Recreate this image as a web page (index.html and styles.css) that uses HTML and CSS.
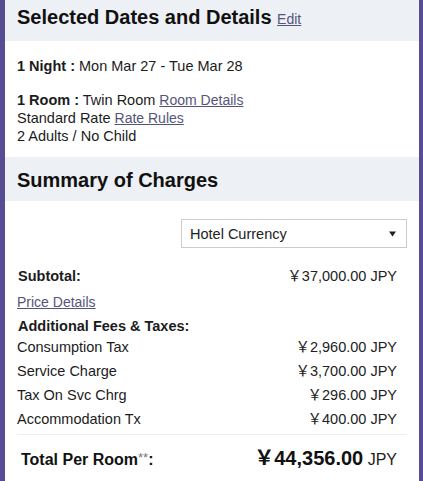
FILE: index.html
```html
<!DOCTYPE html>
<html lang="en">
<head>
<meta charset="utf-8">
<title>Selected Dates and Details</title>
<link rel="stylesheet" href="styles.css">
</head>
<body>
<div class="panel">
  <div class="section-head section-head--first">
    <h2 class="section-title">Selected Dates and Details <a href="#" class="link edit-link">Edit</a></h2>
  </div>
  <div class="details">
    <p class="detail-line"><b>1 Night :</b> Mon Mar 27 - Tue Mar 28</p>
    <div class="detail-group">
      <p class="detail-line"><b>1 Room :</b> Twin Room <a href="#" class="link">Room Details</a></p>
      <p class="detail-line">Standard Rate <a href="#" class="link">Rate Rules</a></p>
      <p class="detail-line">2 Adults / No Child</p>
    </div>
  </div>
  <div class="section-head">
    <h2 class="section-title">Summary of Charges</h2>
  </div>
  <div class="summary">
    <div class="currency-row">
      <div class="select">
        <span>Hotel Currency</span>
        <svg class="select-arrow" width="7" height="6" viewBox="0 0 7 6"><path d="M0 0.5H7L3.5 5.5Z" fill="#222"/></svg>
      </div>
    </div>
    <div class="charge-row charge-row--subtotal">
      <span class="strong">Subtotal:</span>
      <span class="amount"><span class="yen">￥</span>37,000.00 JPY</span>
    </div>
    <div class="price-details"><a href="#" class="link">Price Details</a></div>
    <div class="fees-title strong">Additional Fees &amp; Taxes:</div>
    <div class="charge-row charge-row--fee">
      <span>Consumption Tax</span>
      <span class="amount"><span class="yen">￥</span>2,960.00 JPY</span>
    </div>
    <div class="charge-row charge-row--fee">
      <span>Service Charge</span>
      <span class="amount"><span class="yen">￥</span>3,700.00 JPY</span>
    </div>
    <div class="charge-row charge-row--fee">
      <span>Tax On Svc Chrg</span>
      <span class="amount"><span class="yen">￥</span>296.00 JPY</span>
    </div>
    <div class="charge-row charge-row--fee">
      <span>Accommodation Tx</span>
      <span class="amount"><span class="yen">￥</span>400.00 JPY</span>
    </div>
    <div class="total-row">
      <span class="total-label">Total Per Room<span class="stars">**</span>:</span>
      <span class="total-amount"><span class="total-value"><span class="yen">￥</span>44,356.00</span> JPY</span>
    </div>
  </div>
</div>
</body>
</html>
```

FILE: styles.css
```css
html, body {
  margin: 0;
  padding: 0;
}
body {
  background: #584c94;
  font-family: "Liberation Sans", Arial, "Noto Sans CJK JP", sans-serif;
  color: #1c1c1c;
}
.panel {
  margin: 0 4px 0 5px;
  background: #ffffff;
  min-height: 481px;
}
.section-head {
  background: #edf0f4;
  padding: 11px 12px 9px;
}
.section-head--first {
  padding: 5px 12px 12px;
}
.section-title {
  margin: 0;
  font-size: 20px;
  line-height: 24px;
  font-weight: bold;
  color: #111111;
}
.link {
  color: #55557a;
  text-decoration: underline;
  font-size: 14px;
  font-weight: normal;
  line-height: 1;
}
.edit-link {
  font-size: 14px;
}
.details {
  padding: 16px 12px 12px;
  font-size: 14.5px;
  line-height: 18px;
}
.detail-line {
  margin: 0;
}
.detail-group {
  margin-top: 16px;
}
.summary {
  padding: 0 12px 20px;
  font-size: 14.5px;
  line-height: 18px;
}
.currency-row {
  display: flex;
  justify-content: flex-end;
  padding-top: 18px;
}
.select {
  width: 226px;
  height: 29px;
  box-sizing: border-box;
  border: 1px solid #cccccc;
  background: #ffffff;
  display: flex;
  align-items: center;
  justify-content: space-between;
  padding: 0 10px 0 8px;
  color: #222222;
}
.select-arrow {
  display: block;
}
.strong {
  font-weight: bold;
}
.charge-row {
  display: flex;
  justify-content: space-between;
  padding: 0 10px 0 1px;
  height: 18px;
}
.charge-row--subtotal {
  margin-top: 19px;
}
.charge-row--fee {
  padding-left: 0;
  margin-top: 6px;
}
.fees-title + .charge-row--fee {
  margin-top: 3px;
}
.price-details {
  margin-top: 8px;
  height: 18px;
}
.fees-title {
  margin-top: 6px;
  padding-left: 1px;
}
.amount {
  color: #222222;
}
.yen {
  font-family: "Noto Sans CJK JP", sans-serif;
  line-height: 0;
}
.total-row {
  display: flex;
  justify-content: space-between;
  align-items: baseline;
  margin-top: 6px;
  border-top: 1px solid #eeeeee;
  padding: 11px 10px 0 4px;
  line-height: 24px;
}
.total-label {
  font-size: 16px;
  font-weight: bold;
  color: #111111;
}
.stars {
  font-weight: normal;
  color: #777777;
  font-size: 13px;
  vertical-align: 3px;
  line-height: 0;
}
.total-amount {
  font-size: 16px;
  color: #222222;
}
.total-value {
  font-size: 20px;
  font-weight: bold;
  color: #111111;
}
```
